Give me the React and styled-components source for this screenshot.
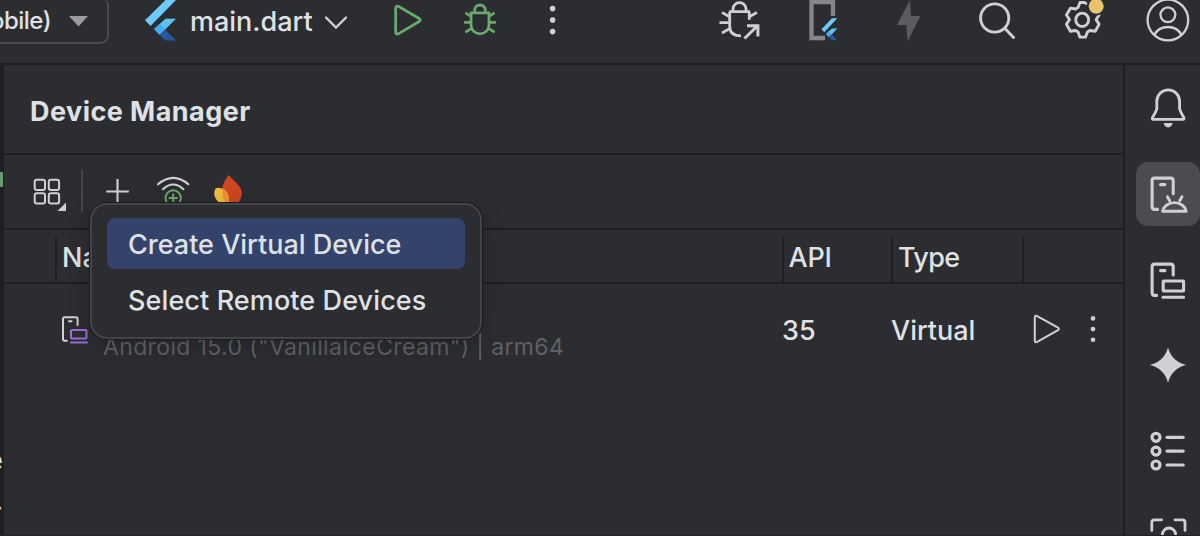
import React from "react";
import styled, { createGlobalStyle } from "styled-components";

const c = {
  bg: "#2b2d30",
  line: "#1e1f22",
  text: "#dfe1e5",
  icon: "#ced0d6",
  green: "#6aab6c",
  muted: "#606166",
};

const GlobalStyle = createGlobalStyle`
  * { box-sizing: border-box; }
  body {
    margin: 0;
    background: ${c.bg};
    color: ${c.text};
    font-family: Inter, "Liberation Sans", sans-serif;
    overflow: hidden;
  }
`;

const Window = styled.div`
  width: 1200px;
  height: 536px;
  display: flex;
  flex-direction: column;
  background: ${c.bg};
  border-bottom: 1px solid #2a1d25;
  overflow: hidden;
`;

const TopBar = styled.header`
  height: 65px;
  flex: none;
  display: flex;
  align-items: flex-start;
  border-bottom: 2px solid ${c.line};
`;

const Glyph = styled.svg.attrs({ fill: "none" })`
  display: block;
  flex: none;
  margin-left: ${(p) => p.$gap || 0}px;
  margin-top: ${(p) => p.$top || 0}px;
`;

const Label = styled.span`
  flex: none;
  white-space: pre;
  font-size: ${(p) => p.$size || 27}px;
  font-weight: ${(p) => p.$weight || 450};
  letter-spacing: ${(p) => p.$track || 0}px;
  line-height: 32px;
  color: ${(p) => p.$color || c.text};
`;

const DeviceCombo = styled.div`
  width: 109px;
  height: 44px;
  display: flex;
  justify-content: flex-end;
  align-items: flex-start;
  padding: 5px 19px 0 0;
  border: 2px solid #4b4c51;
  border-top: 0;
  border-left: 0;
  border-radius: 0 9px 9px 0;
  border-top-right-radius: 5px;
  overflow: hidden;
`;

const FileTab = styled.div`
  width: 123px;
  margin-left: 13px;
  padding-top: 6px;
`;

const Body = styled.div`
  flex: 1;
  min-height: 0;
  display: flex;
`;

const EditorEdge = styled.div`
  width: 4px;
  flex: none;
  display: flex;
  flex-direction: column;
  align-items: flex-end;
  background: ${c.line};
  padding: 107px 1px 0 0;
  overflow: hidden;
`;

const ChangeMark = styled.div`
  width: 3px;
  height: 15px;
  flex: none;
  margin-bottom: 258px;
  background: #6c9a72;
`;

const EdgeChar = styled.span`
  flex: none;
  height: 40px;
  font-size: 26px;
  line-height: 32px;
`;

const Panel = styled.main`
  width: 1119px;
  flex: none;
  display: flex;
  flex-direction: column;
`;

const PanelTitle = styled.div`
  height: 90px;
  flex: none;
  padding: 31px 0 0 26px;
  border-bottom: 2px solid ${c.line};
`;

const Toolbar = styled.div`
  position: relative;
  height: 75px;
  flex: none;
  display: flex;
  align-items: flex-start;
  padding: 15px 0 0 28px;
  border-bottom: 2px solid ${c.line};
`;

const Separator = styled.div`
  width: 2px;
  height: 43px;
  margin-left: 13px;
  background: #43454a;
`;

const HeaderRow = styled.div`
  height: 54px;
  flex: none;
  display: grid;
  grid-template-columns: 53px 727px 109px 131px 1fr;
  align-items: end;
  border-bottom: 2px solid ${c.line};
`;

const HeaderCell = styled.div`
  height: 45px;
  border-right: ${(p) => (p.$last ? 0 : 2)}px solid ${c.line};
  padding: 5px 0 0 ${(p) => p.$pad || 0}px;
`;

const DeviceRow = styled.div`
  height: 92px;
  flex: none;
  display: grid;
  grid-template-columns: 99px 679px 109px 138px 1fr;
`;

const Cell = styled.div`
  display: flex;
  padding-top: ${(p) => p.$top}px;
  padding-left: ${(p) => p.$pad || 0}px;
`;

const Menu = styled.div`
  position: absolute;
  z-index: 2;
  left: 86px;
  top: 48px;
  width: 392px;
  height: 136px;
  display: flex;
  flex-direction: column;
  gap: 5px;
  padding: 13px 15px;
  background: ${c.bg};
  border: 2px solid #434448;
  border-radius: 17px;
  box-shadow: 0 0 0 1px #1b1c1f, 0 6px 22px rgba(0, 0, 0, 0.22);
`;

const MenuItem = styled.div`
  height: 51px;
  flex: none;
  display: flex;
  align-items: center;
  padding: 2px 0 0 21px;
  border-radius: 8px;
  background: ${(p) => (p.$active ? "#34436b" : "transparent")};
`;

const Rail = styled.aside`
  flex: 1;
  display: flex;
  flex-direction: column;
  gap: 22px;
  padding: 11px 0 0 11px;
  border-left: 2px solid ${c.line};
  overflow: hidden;
`;

const RailButton = styled.div`
  width: 64px;
  height: 64px;
  flex: none;
  border-radius: 12px;
  background: ${(p) => (p.$active ? "#4b4c50" : "transparent")};
`;

const FlutterShape = () => (
  <>
    <path d="M20.5 0H31L5.5 26 0 20.3z" fill="#6ccbf8" />
    <path d="M20.5 18.7H31L19.5 30.3l-4.8 4.4-5.6-5.6z" fill="#5cc2f6" />
    <path d="m9.1 29.1 5.5-5.4 5.4 5.6-5.4 5.4z" fill="#4aaaf0" />
    <path d="M14.6 34.8 20 29.4 31 40.6H20.3z" fill="#25589f" />
  </>
);

const Bug = ({ color }) => (
  <g stroke={color} strokeWidth="2.8" strokeLinecap="round">
    <path d="M12 12.8V10.5a5.5 5.5 0 0 1 11 0v2.3M8.3 12.8h18.4M8.3 13v12a9.1 8.8 0 0 0 18.4 0V13M2.2 22.4h6M26.8 22.4h6M3.4 13.4l4.8 3M31.6 13.4l-4.8 3M3.4 31.6l5-3M31.6 31.6l-5-3" />
  </g>
);

const railStroke = { stroke: c.icon, strokeWidth: 3.1, strokeLinecap: "round", strokeLinejoin: "round" };

const railItems = [
  {
    id: "notifications",
    art: (
      <>
        <path d="M20.8 25.2a11.4 11.4 0 0 1 22.8 0v7.6q1 3.6 4.2 8.6.8 2-.9 2H17.4q-1.7 0-.9-2 3.3-5 4.3-8.6z" {...railStroke} strokeWidth="2.8" />
        <path d="M27.6 47h9q-1 4.4-4.5 4.4T27.6 47z" fill={c.icon} />
      </>
    ),
  },
  {
    id: "device-manager",
    active: true,
    art: (
      <g {...railStroke}>
        <path d="M37.2 31.8V18.6q0-2.5-2.5-2.5H18.6q-2.5 0-2.5 2.5v26.2q0 2.6 2.5 2.6H21.5M24.6 22.6h4.3" />
        <path d="M26.6 49.2a12 10.5 0 0 1 23.6 0zM31.4 34.8l2.3 4M46 34.8l-2.3 4" strokeWidth="2.9" />
      </g>
    ),
  },
  {
    id: "running-devices",
    art: (
      <g {...railStroke}>
        <path d="M37.2 27V18.6q0-2.5-2.5-2.5H18.6q-2.5 0-2.5 2.5v26.2q0 2.6 2.5 2.6h2M24.6 22.6h4.3M27 49.2h20.6" />
        <rect x="27.2" y="33" width="20.4" height="10" rx="0.5" />
      </g>
    ),
  },
  {
    id: "gemini",
    art: <path d="M32 13.3Q35.5 27.2 50 31 35.5 34.8 32 49 28.5 34.8 14 31 28.5 27.2 32 13.3z" fill={c.icon} />,
  },
  {
    id: "structure",
    art: (
      <g {...railStroke} strokeWidth="3.2">
        {[17.3, 31.1, 45].map((y) => (
          <React.Fragment key={y}>
            <circle cx="20" cy={y} r="4" />
            <path d={`M31 ${y}h16.2`} />
          </React.Fragment>
        ))}
      </g>
    ),
  },
  {
    id: "inspection",
    art: (
      <g {...railStroke} strokeWidth="2.8">
        <path d="M15.8 24.4v-8q0-2.6 2.6-2.6h7.2M39 13.8h7.4q2.6 0 2.6 2.6v8" />
        <circle cx="33" cy="28.6" r="6.6" />
      </g>
    ),
  },
];

const Dots = ({ gap, top, r, step, h = 44, y, x = 4 }) => (
  <Glyph $gap={gap} $top={top} width="8" height={h} viewBox={`0 0 8 ${h}`}>
    {[0, 1, 2].map((i) => (
      <circle key={i} cx={x} cy={y + i * step} r={r} fill={c.icon} />
    ))}
  </Glyph>
);

function MainToolbar() {
  return (
    <TopBar>
      <DeviceCombo>
        <Label $size={24} $track={-0.5}>mobile)</Label>
        <Glyph $gap={18} $top={11} width="19" height="11" viewBox="0 0 19 11">
          <path d="M0 0h19L9.5 10.5z" fill="#9b9ca1" />
        </Glyph>
      </DeviceCombo>
      <Glyph $gap={36} width="32" height="44" viewBox="0 0 32 44">
        <FlutterShape />
      </Glyph>
      <FileTab>
        <Label $size={27} $weight={500}>main.dart</Label>
      </FileTab>
      <Glyph $gap={11} $top={15} width="24" height="16" viewBox="0 0 24 16">
        <path d="M2 2.5 12 12.5 22 2.5" stroke={c.icon} strokeWidth="2.4" strokeLinecap="round" />
      </Glyph>
      <Glyph $gap={45} width="30" height="44" viewBox="0 0 30 44">
        <path d="M2.7 8.4q0-3.2 3-1.8l20.5 11.9q2 1.5 0 3L5.7 33.6q-3 1.4-3-1.8z" stroke={c.green} strokeWidth="2.8" />
      </Glyph>
      <Glyph $gap={40} width="34" height="44" viewBox="0 0 35 44" preserveAspectRatio="none">
        <Bug color={c.green} />
      </Glyph>
      <Dots gap={51} r={2.8} step={11.5} y={8.6} x={4.6} />
      <Glyph $gap={163} width="43" height="44" viewBox="0 0 43 44">
        <g stroke={c.icon} strokeWidth="2.8" strokeLinecap="butt">
          <path d="M14 10.5v-1.500a6.500 6.300 0 0 1 13 0v1.500M10.100 11.700h20.900M10.700 11.700v14.800q0 9.300 11.300 9.300M30.300 11.700v8.100M.5 22.600h9.500M3 12.400l7.500 4.400M38 12.400l-7.500 4.400M3 33l8-4.600" />
          <path d="M25.500 38.500 38.500 25.800M28 25.800h10.900v10.700" strokeWidth="3" />
        </g>
      </Glyph>
      <Glyph $gap={47} width="30" height="44" viewBox="0 0 30 44">
        <path d="M24 16V2.200H2.500v35.800H16" stroke="#85868a" strokeWidth="4.300" />
        <g transform="translate(12.500 18.300) scale(.51 .54)">
          <FlutterShape />
        </g>
      </Glyph>
      <Glyph $gap={57} width="27" height="44" viewBox="0 0 27 44">
        <path d="M14 0 1 25h9.300L11.500 41.500 24.500 16H15z" fill="#5b5c60" />
      </Glyph>
      <Glyph $gap={54} width="40" height="44" viewBox="0 0 40 44">
        <g stroke={c.icon} strokeWidth="2.900" strokeLinecap="round">
          <circle cx="17.700" cy="18" r="14.100" />
          <path d="m27.900 28.500 8.700 9" />
        </g>
      </Glyph>
      <Glyph $gap={43} width="44" height="44" viewBox="0 0 44 44">
        <g transform="translate(3 .2) scale(.95 .98)">
          <path d="M23.700 2.400h-5.900l-1.900 5q-1.100.5-2.600 1.500l-5.500-.8-4.200 7 3.300 4.800-3.300 4.600 4.200 7.200 5.500-.7 2.600 1.500 1.900 5.200h5.900l2-5.200 2.600-1.500 5.700.7 4-7.200-3.200-4.600 3.200-4.800-1.700-3.400M23.700 2.400l1 2.200" stroke={c.icon} strokeWidth="3" strokeLinejoin="round" />
          <circle cx="20.200" cy="20" r="6.800" stroke={c.icon} strokeWidth="3" />
        </g>
        <circle cx="36.200" cy="6.200" r="9.200" fill={c.bg} />
        <circle cx="36.200" cy="6.200" r="7.500" fill="#e9c46a" />
      </Glyph>
      <Glyph $gap={41} width="46" height="44" viewBox="0 0 46 44">
        <g stroke={c.icon} strokeWidth="2.300">
          <circle cx="22.900" cy="20" r="20.300" />
          <circle cx="22.900" cy="14.800" r="7.400" />
          <path d="M9.100 35.200q4-8.200 13.800-8.200t13.800 8.200" />
        </g>
      </Glyph>
    </TopBar>
  );
}

function DeviceToolbar() {
  return (
    <Toolbar>
      <Glyph $gap={0} width="36" height="44" viewBox="32 170 36 44">
        <g stroke={c.icon} strokeWidth="2">
          <rect x="34.7" y="179.7" width="10.3" height="10.3" rx="2" />
          <rect x="48.8" y="179.7" width="10.3" height="10.3" rx="2" />
          <rect x="34.7" y="193.3" width="10.3" height="10.3" rx="2" />
          <rect x="48.8" y="193.3" width="10.3" height="10.3" rx="2" />
        </g>
        <path d="M66 202.5v8.5h-8.5z" fill={c.icon} />
      </Glyph>
      <Separator />
      <Glyph $gap={22} width="26" height="44" viewBox="105 170 26 44">
        <path d="M106.3 191.5h22.5M117.5 179v25" stroke={c.icon} strokeWidth="2.1" />
      </Glyph>
      <Glyph $gap={25} width="34" height="44" viewBox="156 170 34 44">
        <g stroke={c.icon} strokeWidth="2.1" strokeLinecap="round">
          <path d="M158 184.3q15.2-12.8 30.4 0M163 189.2q10.2-9.4 20.4 0" />
        </g>
        <g stroke={c.green} strokeWidth="1.9">
          <circle cx="173.2" cy="198" r="7.7" />
          <path d="M168.7 198h9M173.2 193.5v9" />
        </g>
      </Glyph>
      <Glyph $gap={23} width="31" height="44" viewBox="213 170 31 44">
        <path d="M228.7 175c-4 5.5-6.8 10-6.8 17 0 7 3 13 9.5 13 6.3 0 10.300-5 10.300-12 0-7.500-8.500-12.500-13-18z" fill="#cf4522" />
        <path d="M215.500 188.500c3-1.800 13.500-.5 13.500 12.500 0 3-1 4-3 4-8 0-14.500-9-10.500-16.500z" fill="#efbd3e" />
        <path d="M222.200 188.500c4 1.500 6.800 5.500 6.800 12.500v3c-5-2-7.500-7-6.800-15.500z" fill="#ef9230" />
      </Glyph>
      <Menu>
        <MenuItem $active>
          <Label>Create Virtual Device</Label>
        </MenuItem>
        <MenuItem>
          <Label $track={0.1}>Select Remote Devices</Label>
        </MenuItem>
      </Menu>
    </Toolbar>
  );
}

function DeviceTable() {
  return (
    <>
      <HeaderRow>
        <HeaderCell />
        <HeaderCell $pad={5}><Label>Name</Label></HeaderCell>
        <HeaderCell $pad={4.5}><Label $track={-0.2}>API</Label></HeaderCell>
        <HeaderCell $pad={5}><Label $track={-0.6}>Type</Label></HeaderCell>
        <HeaderCell $last />
      </HeaderRow>
      <DeviceRow>
        <Cell $top={30} $pad={56}>
          <Glyph width="30" height="32" viewBox="60 314 30 32">
            <g strokeWidth="2" strokeLinejoin="round" strokeLinecap="round">
              <path d="M77.6 325v-6q0-1.8-1.8-1.8H64.8q-1.8 0-1.8 1.8v20q0 1.8 1.8 1.8h2M69 321.2h2.6" stroke={c.icon} />
              <path d="M72 329.9h13.5q1 0 1 1v6.5q0 1-1 1H72q-1 0-1-1v-6.5q0-1 1-1zM71 342.6h16" stroke="#9a6dd7" />
            </g>
          </Glyph>
        </Cell>
        <Cell $top={47}><Label $size={23} $weight={400} $track={0.36} $color={c.muted}>{'Android 15.0 ("VanillaIceCream") | arm64'}</Label></Cell>
        <Cell $top={31}><Label>35</Label></Cell>
        <Cell $top={31}><Label>Virtual</Label></Cell>
        <Cell $top={25}>
          <Glyph $gap={3} width="30" height="40" viewBox="1032 309 30 40">
            <path d="M1034.8 317.5q0-2.6 2.4-1.4l20.8 11.4q1.7 1.3 0 2.6l-20.8 11.8q-2.4 1.2-2.4-1.4z" stroke={c.icon} strokeWidth="2" />
          </Glyph>
          <Dots gap={27} r={2.3} step={10.7} y={9.4} h={40} />
        </Cell>
      </DeviceRow>
    </>
  );
}

export default function App() {
  return (
    <>
      <GlobalStyle />
      <Window>
        <MainToolbar />
        <Body>
          <EditorEdge>
            <ChangeMark />
            <EdgeChar>e</EdgeChar>
            <EdgeChar>.</EdgeChar>
          </EditorEdge>
          <Panel>
            <PanelTitle>
              <Label $weight={700} $track={0.45}>Device Manager</Label>
            </PanelTitle>
            <DeviceToolbar />
            <DeviceTable />
          </Panel>
          <Rail>
            {railItems.map((item) => (
              <RailButton key={item.id} $active={item.active}>
                <Glyph width="64" height="64" viewBox="0 0 64 64">{item.art}</Glyph>
              </RailButton>
            ))}
          </Rail>
        </Body>
      </Window>
    </>
  );
}
